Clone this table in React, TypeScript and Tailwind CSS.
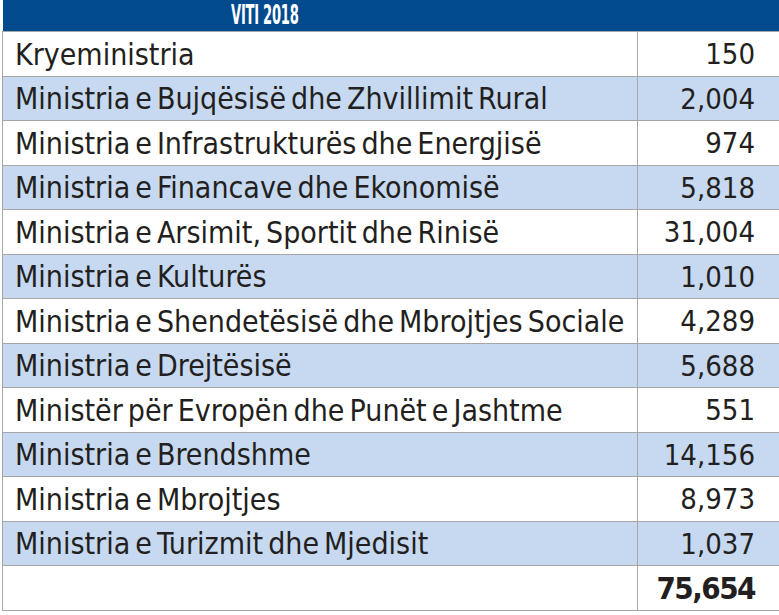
const rows: [string, string][] = [
  ["Kryeministria", "150"],
  ["Ministria e Bujqësisë dhe Zhvillimit Rural", "2,004"],
  ["Ministria e Infrastrukturës dhe Energjisë", "974"],
  ["Ministria e Financave dhe Ekonomisë", "5,818"],
  ["Ministria e Arsimit, Sportit dhe Rinisë", "31,004"],
  ["Ministria e Kulturës", "1,010"],
  ["Ministria e Shendetësisë dhe Mbrojtjes Sociale", "4,289"],
  ["Ministria e Drejtësisë", "5,688"],
  ["Ministër për Evropën dhe Punët e Jashtme", "551"],
  ["Ministria e Brendshme", "14,156"],
  ["Ministria e Mbrojtjes", "8,973"],
  ["Ministria e Turizmit dhe Mjedisit", "1,037"],
];

export default function App() {
  return (
    <div className="w-[779px] h-[615px] bg-white overflow-hidden" style={{ fontFamily: '"DejaVu Sans Condensed", "DejaVu Sans", sans-serif' }}>
      <table className="border-collapse w-[800px] ml-[2px] text-[#231f20]">
        <thead>
          <tr>
            <th colSpan={2} className="h-[31px] bg-[#024a8e] p-0 text-left">
              <span className="inline-block ml-[228px] mt-[1px] origin-left scale-x-[0.54] text-white text-[27px] font-bold leading-none tracking-[-0.5px]">VITI 2018</span>
            </th>
          </tr>
        </thead>
        <tbody>
          {rows.map(([name, value], i) => (
            <tr key={name} className={i % 2 === 1 ? "bg-[#c6d9f0]" : "bg-white"}>
              <td className="h-[44.5px] w-[635px] border border-[#a6a6a6] pl-[12px] pt-[2px] text-[30px] leading-none whitespace-nowrap [word-spacing:-3.5px]">{name}</td>
              <td className="h-[44.5px] border border-[#a6a6a6] pr-[46px] pt-[2px] text-right text-[29px] leading-none">{value}</td>
            </tr>
          ))}
          <tr className="bg-white">
            <td className="h-[44.5px] w-[635px] border border-[#a6a6a6]"></td>
            <td className="h-[44.5px] border border-[#a6a6a6] pr-[46px] pt-[2px] text-right text-[31px] font-bold leading-none tracking-[-1.5px]">75,654</td>
          </tr>
        </tbody>
      </table>
    </div>
  );
}
